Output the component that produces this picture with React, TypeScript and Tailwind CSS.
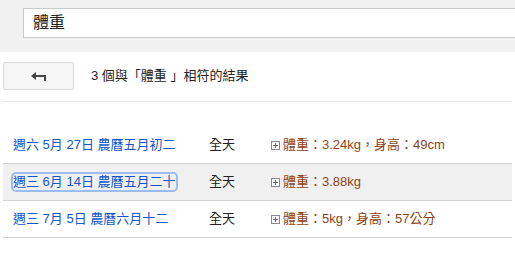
const font = { fontFamily: '"Liberation Sans", "Noto Sans CJK TC", sans-serif' };

type Row = { date: string; detail: string; focused?: boolean; shaded?: boolean };

const rows: Row[] = [
  { date: "週六 5月 27日 農曆五月初二", detail: "體重：3.24kg，身高：49cm" },
  { date: "週三 6月 14日 農曆五月二十", detail: "體重：3.88kg", focused: true, shaded: true },
  { date: "週三 7月 5日 農曆六月十二", detail: "體重：5kg，身高：57公分" },
];

function BackArrow() {
  return (
    <svg width="16" height="9" viewBox="0 0 16 9" fill="#444">
      <polygon points="0,4 5,0 5,8" />
      <rect x="4" y="3" width="11" height="2" />
      <rect x="13" y="3" width="2" height="6" />
    </svg>
  );
}

function PlusBox() {
  return (
    <svg width="9" height="9" viewBox="0 0 9 9" className="shrink-0">
      <rect x="0.5" y="0.5" width="8" height="8" fill="white" stroke="#8a8a8a" />
      <rect x="2" y="4" width="5" height="1" fill="#666" />
      <rect x="4" y="2" width="1" height="5" fill="#666" />
    </svg>
  );
}

export default function App() {
  return (
    <div
      className="w-[515px] h-[260px] bg-white overflow-hidden text-[13px] [text-spacing-trim:space-all]"
      style={font}
    >
      <div className="h-[52px] bg-[#f1f1f1] pt-2 pl-[23px]">
        <div className="h-[30px] w-[520px] bg-white border border-[#c9c9c9] flex items-center pl-[9px] text-[16px] text-[#222]">
          體重
        </div>
      </div>

      <div className="px-[3px]">
        <div className="flex items-center mt-[10px]">
          <button className="w-[71px] h-[28px] bg-[#f5f5f5] border border-[#dcdcdc] rounded-[2px] flex items-center justify-center">
            <BackArrow />
          </button>
          <span className="ml-[17px] text-[#222]">3 個與「體重 」相符的結果</span>
        </div>
        <div className="mt-[11px] border-t border-[#ebebeb]" />

        <div className="mt-[25px]">
          {rows.map((r) => (
            <div
              key={r.date}
              className={`h-[37px] flex items-center border-b border-[#d0d0d0] ${r.shaded ? "bg-[#f0f0f0]" : ""}`}
            >
              <div className="w-[206px] pl-[10px]">
                <span
                  className={`inline-block leading-[16px] text-[#1155cc] ${r.focused ? "rounded-[3px] ring-2 ring-[#9bbcf3]" : ""}`}
                >
                  {r.date}
                </span>
              </div>
              <div className="w-[62px] text-[#222]">全天</div>
              <div className="flex items-center gap-[3px] text-[#8d4314]">
                <PlusBox />
                <span>{r.detail}</span>
              </div>
            </div>
          ))}
        </div>
      </div>
    </div>
  );
}
